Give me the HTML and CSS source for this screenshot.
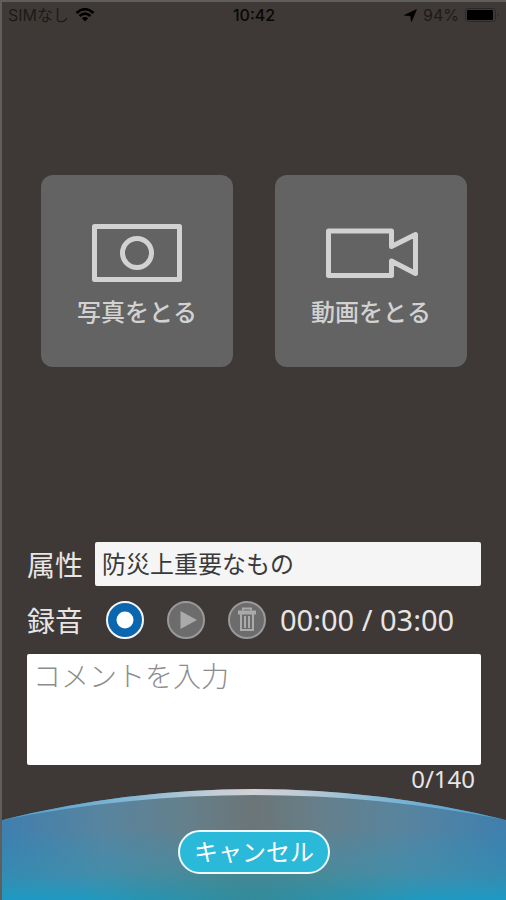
FILE: index.html
```html
<!DOCTYPE html>
<html lang="ja">
<head>
<meta charset="utf-8">
<meta name="viewport" content="width=device-width, initial-scale=1">
<title>写真・動画の投稿</title>
<link rel="stylesheet" href="styles.css">
</head>
<body>
<div class="screen">
  <header class="status">
    <div class="status-left">
      <span>SIMなし</span>
      <svg class="wifi" viewBox="0 0 20 14" width="20" height="14" aria-hidden="true">
        <path d="M1.500 5Q10-2.500 18.500 5M4.500 8Q10 3.200 15.500 8" fill="none" stroke="#000" stroke-width="2.600"/>
        <path d="M6.800 10.200Q10 7.600 13.200 10.200L10 13.500Z" fill="#000"/>
      </svg>
    </div>
    <time class="clock">10:42</time>
    <div class="status-right">
      <svg viewBox="0 0 13 13" width="13" height="13" aria-hidden="true"><path d="M12.500.5L7.500 12.500 6.500 6.800.5 6.200Z" fill="#000" stroke="#000" stroke-linejoin="round" stroke-width=".6"/></svg>
      <span>94%</span>
      <svg viewBox="0 0 35 14" width="35" height="14" aria-hidden="true">
        <rect x=".5" y=".5" width="30" height="13" rx="3" fill="none" stroke="#2b2727"/>
        <rect x="2" y="2" width="26" height="10" rx="1" fill="#000"/>
        <path d="M32.500 5v4q2-2 0-4Z" fill="#2b2727"/>
      </svg>
    </div>
  </header>
  <main class="content">
    <div class="captures">
      <button class="capture" type="button">
        <svg viewBox="0 0 96 64" width="96" height="64" fill="none" stroke="#d2d2d2" stroke-width="5" stroke-linejoin="round" aria-hidden="true">
          <rect x="5.500" y="5.500" width="85" height="53"/><circle cx="48" cy="32" r="14.500"/>
        </svg>
        <span>写真をとる</span>
      </button>
      <button class="capture" type="button">
        <svg viewBox="0 0 96 64" width="96" height="64" fill="none" stroke="#d2d2d2" stroke-width="5" stroke-linejoin="round" aria-hidden="true">
          <path d="M5.500 10H68.500V25.500L92.500 13.500V52.500L68.500 40V54.500H5.500Z"/>
        </svg>
        <span>動画をとる</span>
      </button>
    </div>
    <form class="form">
      <div class="row">
        <label class="label" for="attr">属性</label>
        <input class="attr" id="attr" type="text" value="防災上重要なもの">
      </div>
      <div class="row record-row">
        <span class="label">録音</span>
        <div class="controls">
          <button class="round record" type="button" aria-label="録音を開始"><svg viewBox="0 0 34 34" width="34" height="34"><circle cx="17" cy="17" r="8.500" fill="#fff"/></svg></button>
          <button class="round" type="button" aria-label="再生"><svg viewBox="0 0 34 34" width="34" height="34"><path d="M11.500 8L28 17 11.500 26Z" fill="#aaa"/></svg></button>
          <button class="round" type="button" aria-label="削除"><svg viewBox="0 0 34 34" width="34" height="34" fill="none" stroke="#aaa"><path d="M8 9.500H26" stroke-width="4"/><path d="M13 7.500V5.500H21V7.500M11 11V27H23V11M15 13V25M19 13V25" stroke-width="2"/></svg></button>
        </div>
        <span class="timer">00:00 / 03:00</span>
      </div>
      <textarea class="comment" aria-label="コメント" placeholder="コメントを入力"></textarea>
      <div class="count">0/140</div>
    </form>
  </main>
  <footer class="footer">
    <svg class="dome" viewBox="0 0 504 112" preserveAspectRatio="none" aria-hidden="true">
      <defs>
        <linearGradient id="side"><stop offset="0" stop-color="#3f7fae"/><stop offset=".2" stop-color="#58849f"/><stop offset=".36" stop-color="#65808c"/><stop offset=".5" stop-color="#6b7577"/><stop offset=".64" stop-color="#65808c"/><stop offset=".8" stop-color="#58849f"/><stop offset="1" stop-color="#3f7fae"/></linearGradient>
        <linearGradient id="floor" x2="0" y2="1"><stop offset=".35" stop-color="#1a9bc5" stop-opacity="0"/><stop offset=".75" stop-color="#279ab8" stop-opacity=".4"/><stop offset="1" stop-color="#1a9bc5" stop-opacity=".95"/></linearGradient>
        <radialGradient id="glow" gradientUnits="userSpaceOnUse" cx="0" cy="0" r="1" gradientTransform="translate(252 112) scale(180 45)"><stop offset="0" stop-color="#3d8588" stop-opacity=".7"/><stop offset="1" stop-color="#3d8588" stop-opacity="0"/></radialGradient>
        <linearGradient id="rim"><stop offset="0" stop-color="#489fce"/><stop offset=".25" stop-color="#82b7d5"/><stop offset=".42" stop-color="#c2cdd6"/><stop offset=".5" stop-color="#d0d2d5"/><stop offset=".58" stop-color="#c2cdd6"/><stop offset=".75" stop-color="#82b7d5"/><stop offset="1" stop-color="#489fce"/></linearGradient>
      </defs>
      <path d="M0 32Q252-30 504 32V112H0Z" fill="url(#side)"/>
      <path d="M0 32Q252-30 504 32V112H0Z" fill="url(#floor)"/>
      <path d="M0 32Q252-30 504 32V112H0Z" fill="url(#glow)"/>
      <path d="M0 32Q252-30 504 32Q252-18 0 32Z" fill="url(#rim)"/>
    </svg>
    <button class="cancel" type="button">キャンセル</button>
  </footer>
</div>
</body>
</html>
```
FILE: styles.css
```css
* { box-sizing: border-box; }
body {
  margin: 0;
  background: #3e3937;
  color: #e8e5e4;
  font-family: "Noto Sans CJK JP", sans-serif;
}
button, input, textarea { font-family: inherit; }
button { cursor: pointer; }
svg { display: block; flex: none; }

.screen {
  display: flex;
  flex-direction: column;
  min-height: 100vh;
  border-top: 2px solid #605d5d;
  border-left: 2px solid #605d5d;
}

.status {
  display: grid;
  grid-template-columns: 1fr auto 1fr;
  align-items: center;
  height: 26px;
  padding: 0 6px;
  color: #1c1919;
  font: 16px/26px Inter, "Noto Sans CJK JP", sans-serif;
}
.status-left, .status-right { display: flex; align-items: center; gap: 6px; }
.status-right { justify-content: flex-end; }
.clock { color: #080707; font-weight: 500; }

.content { flex: 1; display: flex; flex-direction: column; padding: 0 25px; }
.captures {
  display: grid;
  grid-template-columns: 1fr 1fr;
  gap: 42px;
  padding: 0 14px;
  margin-top: 147px;
}
.capture {
  display: flex;
  flex-direction: column;
  align-items: center;
  justify-content: center;
  gap: 8px;
  aspect-ratio: 1;
  padding: 8px 0 0;
  border: 0;
  border-radius: 12px;
  background: #636363;
  color: #d2d2d2;
  font-size: 24px;
  font-weight: 500;
  line-height: 36px;
}

.form { margin-top: auto; }
.row { display: flex; align-items: center; gap: 12px; }
.label { flex: none; font-size: 28px; line-height: 44px; }
.attr {
  flex: 1;
  min-width: 0;
  height: 44px;
  padding: 0 7px 4px;
  border: 0;
  border-radius: 2px;
  background: #f5f5f5;
  color: #3a3a3a;
  font-size: 24px;
}
.record-row { margin: 12px 0; }
.controls { display: flex; gap: 23px; margin: 0 2px 0 11px; }
.round {
  display: grid;
  place-items: center;
  width: 38px;
  height: 38px;
  padding: 0;
  border: 2px solid #999;
  border-radius: 50%;
  background: #6c6c6c;
}
.record { border-color: #f5f5f5; background: #0b66b0; }
.timer { font: 29px/44px "Noto Sans", sans-serif; white-space: nowrap; }
.comment {
  display: block;
  width: 100%;
  height: 111px;
  padding: 0 6px;
  border: 0;
  border-radius: 2px;
  background: #fff;
  color: #3a3a3a;
  font-size: 28px;
  font-weight: 300;
  line-height: 42px;
  resize: none;
}
.comment::placeholder { color: #8c8c8c; opacity: 1; }
.count {
  padding-right: 6px;
  font: 24px/28px "Noto Sans", sans-serif;
  text-align: right;
}

.footer {
  position: relative;
  display: flex;
  justify-content: center;
  align-items: flex-end;
  height: 112px;
  margin-top: -5px;
  padding-bottom: 26px;
}
.dome { position: absolute; inset: 0; width: 100%; height: 100%; }
.cancel {
  position: relative;
  height: 44px;
  padding: 0 14px 2px;
  border: 2px solid #eefafd;
  border-radius: 22px;
  background: #2bb9d9;
  color: #fff;
  font-size: 24px;
  line-height: 36px;
}
```
